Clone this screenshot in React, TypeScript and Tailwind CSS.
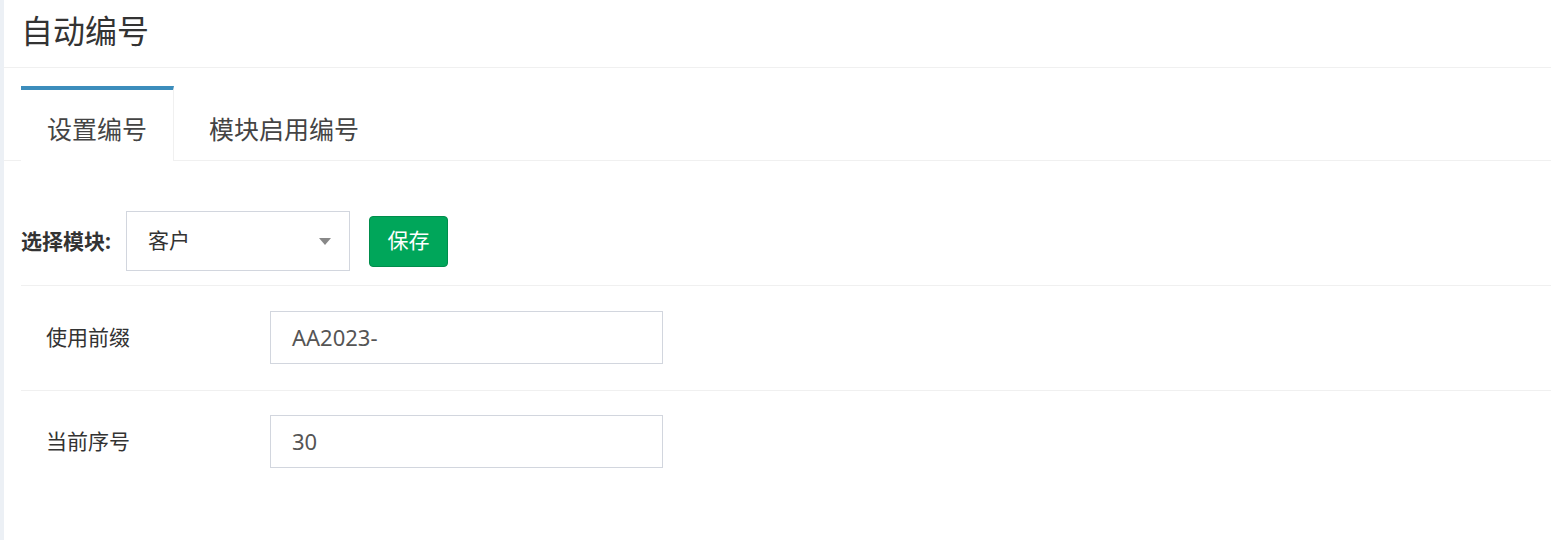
import React from "react"

const font = { fontFamily: '"Noto Sans", "Noto Sans CJK SC", sans-serif' }

const rows = [
  { label: "使用前缀", value: "AA2023-" },
  { label: "当前序号", value: "30" },
]

export default function App() {
  return (
    <div className="flex min-h-[540px] bg-[#ecf0f5] pl-1" style={font}>
      <div className="flex-1 bg-white">
        {/* page header */}
        <div className="flex h-[68px] items-center border-b border-[#f0f0f0] pl-[17px] pb-[5px]">
          <h1 className="text-[32px] leading-[32px] text-[#333]">自动编号</h1>
        </div>

        {/* tabs */}
        <div className="mt-[18px] flex border-b border-[#f0f0f0] pl-[17px]">
          <div className="-mb-px h-[75px] w-[153px] border-t-4 border-r border-[#3c8dbc] border-r-[#f0f0f0] bg-white pt-[27px] text-center text-[25px] leading-[25px] text-[#444]">
            设置编号
          </div>
          <div className="h-[74px] px-[35px] pt-[31px] text-[25px] leading-[25px] text-[#444]">
            模块启用编号
          </div>
        </div>

        <div className="pl-[17px]">
          {/* module select row */}
          <div className="mt-[50px] flex items-center border-b border-[#f0f0f0] pb-[14px]">
            <label className="w-[105px] text-[21px] font-bold leading-[21px] text-[#333]">选择模块:</label>
            <div className="flex h-[60px] w-[224px] items-center justify-between border border-[#d2d6de] pl-[21px] pr-[18px] text-[21px] text-[#333]">
              <span>客户</span>
              <svg width="12" height="7" viewBox="0 0 12 7">
                <polygon points="0,0 12,0 6,7" fill="#888" />
              </svg>
            </div>
            <button className="ml-[19px] h-[51px] w-[79px] rounded-[4px] border border-[#008d4c] bg-[#00a65a] text-[21px] text-white">
              保存
            </button>
          </div>

          {/* settings rows */}
          {rows.map((r, i) => (
            <div
              key={r.label}
              className={
                i < rows.length - 1
                  ? "flex items-center border-b border-[#f0f0f0] pt-[25px] pb-[26px]"
                  : "flex items-center pt-[24px] pb-[26px]"
              }
            >
              <div className="w-[249px] pl-[25px] text-[21px] text-[#333]">{r.label}</div>
              <div className="flex h-[53px] w-[393px] items-center border border-[#d2d6de] pl-[21px] text-[22px] text-[#555]">
                {r.value}
              </div>
            </div>
          ))}
        </div>
      </div>
    </div>
  )
}
